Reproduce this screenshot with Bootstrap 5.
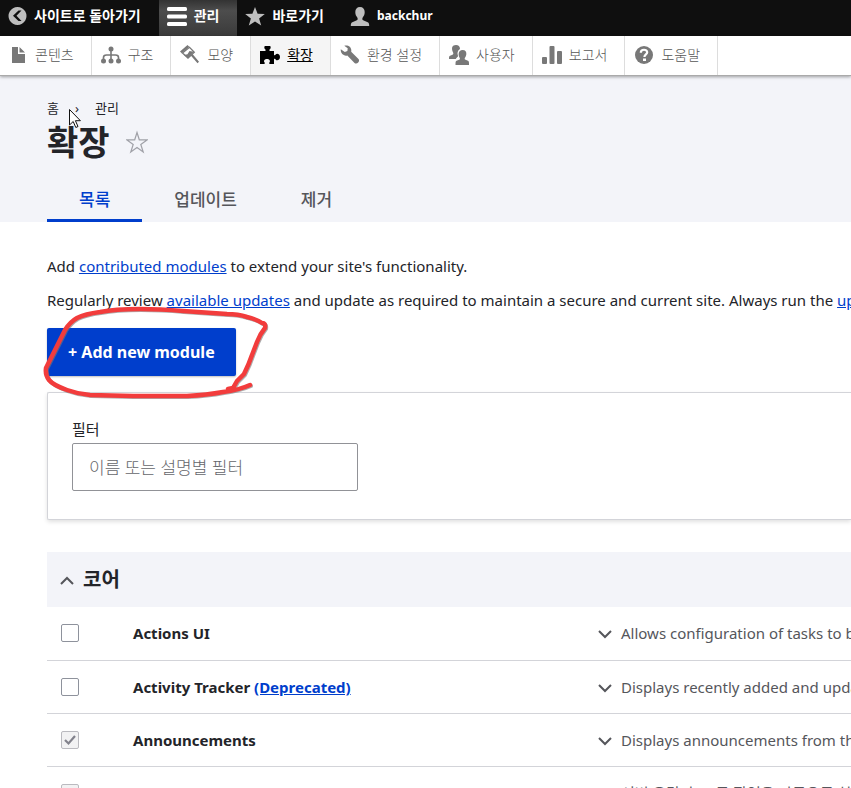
<!DOCTYPE html>
<html lang="ko">
<head>
<meta charset="utf-8">
<meta name="viewport" content="width=device-width, initial-scale=1">
<title>확장</title>
<link href="https://cdn.jsdelivr.net/npm/bootstrap@5.3.0/dist/css/bootstrap.min.css" rel="stylesheet">
<style>
body{font-family:"Noto Sans","Noto Sans CJK KR",sans-serif;font-size:15px;line-height:24px;color:#232429;overflow-x:hidden}
a{color:#003ecc}
svg{flex:none}
.adminbar{background:#0f0f0f;height:36px;font-size:14px;line-height:16px;font-weight:700}
.adminbar a{color:#fff;text-decoration:none;gap:7px;padding:0 18px 4px 8px;height:36px;white-space:nowrap}
.adminbar svg{fill:#bebebe}
.adminbar a.open{background:linear-gradient(#333,#4d4d4d 30%,#3a3a3a)}
.adminbar a.open svg{fill:#fff}
.adminbar .username{font-size:12px}
.tray{height:40px;border-bottom:1px solid #aaa;box-shadow:0 1px 3px rgba(0,0,0,.35);position:relative;z-index:1;font-size:14px;background:#fff}
.tray a{color:#565656;text-decoration:none;border-right:1px solid #ddd;padding:0 17px 2px 9px;gap:7px;font-weight:300;white-space:nowrap}
.tray svg{fill:#787878}
.tray a.now{background:#f5f5f5;color:#000;text-decoration:underline;font-weight:400}
.tray a.now svg{fill:#000}
.pagehead{background:#f3f4f9;padding:20px 47px 0;position:relative}
.crumbs{font-size:13px}
h1{font-size:34px;line-height:44px;font-weight:700}
.tabs{margin-top:12px}
.tabs a{color:#55565b;font-weight:500;font-size:17px;padding:12px 32px 6px;height:46px;text-decoration:none;border-bottom:3px solid transparent}
.tabs a.now{color:#003ecc;border-color:#003ecc}
.content-area{padding:32px 0 0 47px}
.intro{margin-bottom:10px}
.addbtn{background:#003ecc;color:#fff;font-weight:700;border-radius:2px;padding:12px 21px;box-shadow:0 1px 2px rgba(0,0,0,.25);line-height:24px;font-size:16px}
.addbtn:hover{background:#0036b1;color:#fff}
.filterbox{border:1px solid #d3d4d9;border-right:0;border-radius:2px 0 0 2px;box-shadow:0 2px 4px rgba(0,0,0,.12);padding:24px 24px 28px;margin-top:16px}
.filterbox label{font-size:15px;line-height:24px;padding-bottom:2px}
.filterbox input{width:286px;height:48px;border:1px solid #919297;border-radius:2px;padding:0 16px;font-size:17px;font-weight:300}
.filterbox input::placeholder{color:#65666b}
.group{background:#f3f4f9;height:55px;margin-top:32px;padding:0 12px}
.group button{font-size:20px;line-height:24px;font-weight:600;gap:8px;color:#232429}
.modules{table-layout:fixed;width:100%}
.modules td,.modules th{height:53px;border-bottom:1px solid #d3d4d9;padding:0;vertical-align:middle}
.modules .form-check-input{width:18px;height:18px;border:1px solid #8e929c;border-radius:2px;margin:0 0 0 14px;display:block}
.modules .form-check-input:disabled{opacity:1;background-color:#f2f2f3;border-color:#bababf}
.modules .form-check-input:checked{background-image:url("data:image/svg+xml,%3Csvg xmlns='http://www.w3.org/2000/svg' viewBox='0 0 18 18'%3E%3Cpath d='M4 9l3.500 3.500L14 5' fill='none' stroke='%2382828c' stroke-width='2.200'/%3E%3C/svg%3E");background-size:18px}
.c-check{width:86px}
.c-name{width:464px}
.desc{gap:8px;color:#55565b;font-size:15px;line-height:24px}
.ink{left:-7px;top:-22px;pointer-events:none}
.pointer{left:68px;top:32px;pointer-events:none}
</style>
<script src="https://cdn.jsdelivr.net/npm/bootstrap@5.3.0/dist/js/bootstrap.bundle.min.js"></script>
</head>
<body>
<nav class="adminbar d-flex" aria-label="관리 도구">
<a href="#" class="d-flex align-items-center"><svg width="19" height="18" viewBox="0 0 19 18"><path fill-rule="evenodd" d="M9.500 0a9 9 0 1 0 .01 0zM10.500 3.500h3L8.500 8.800l5 5.200h-3L5 8.800z"/></svg>사이트로 돌아가기</a>
<a href="#" class="open d-flex align-items-center"><svg width="20" height="19" viewBox="0 0 20 19"><rect width="20" height="4" rx="1.500"/><rect y="7.500" width="20" height="4" rx="1.500"/><rect y="15" width="20" height="4" rx="1.500"/></svg>관리</a>
<a href="#" class="d-flex align-items-center"><svg width="20" height="19" viewBox="0 0 20 19"><path d="M10 0l2.600 6.700 7.200.2-5.700 4.500 2.100 7.100L10 14.500l-6.200 4 2.100-7.100L.2 6.900l7.200-.2z"/></svg>바로가기</a>
<a href="#" class="d-flex align-items-center"><svg width="20" height="19" viewBox="0 0 20 19"><path d="M10 0c3 0 4.700 2 4.700 5 0 2.500-.8 4-2 5.500-.7 1.500-.5 2.500 1 3.100l4 1.600c1.300.6 1.500 2 1.500 3.800H.8c0-1.800.2-3.200 1.500-3.800l4-1.600c1.500-.6 1.700-1.600 1-3.100C6.100 9 5.300 7.500 5.300 5c0-3 1.700-5 4.700-5z"/></svg><span class="username">backchur</span></a>
</nav>
<nav class="tray d-flex" aria-label="관리 메뉴">
<a href="#" class="d-flex align-items-center"><svg width="19" height="18" viewBox="0 0 19 18"><path d="M3 1h6v7h7v9H3zM10.500 1L16 6.500h-5.500z"/></svg>콘텐츠</a>
<a href="#" class="d-flex align-items-center"><svg width="20" height="18" viewBox="0 0 20 18"><circle cx="10" cy="3" r="2.500"/><circle cx="2.500" cy="15" r="2.500"/><circle cx="10" cy="15" r="2.500"/><circle cx="17.500" cy="15" r="2.500"/><path fill="none" stroke="#787878" stroke-width="1.600" d="M10 4v10M2.500 14v-2.500q0-2.500 3-2.500h9q3 0 3 2.500V14"/></svg>구조</a>
<a href="#" class="d-flex align-items-center"><svg width="20" height="20" viewBox="0 0 20 20"><path d="M0 6.500L7.500 0l1.800 1.800-7.500 6.500z"/><path d="M2.500 8L9.500 2.300l4.800 5L8 13z" fill="none" stroke="#787878" stroke-width="1.300"/><path d="M4 10l3.500-.8L9.500 6l4.300.8-6 6.200zM10.800 10.500l1.700-1.500 6.500 7.800-1.500 1.500z"/></svg>모양</a>
<a href="#" class="now d-flex align-items-center"><svg width="20" height="18" viewBox="0 0 20 18"><path d="M0 5h5.500V3.500C4 3 4 .3 5 0h5c1 .3 1 3-.5 3.500V5H14v4c1 .5 1.300.2 1.800-.7C16.500 7.300 20 7.500 20 11s-3.500 3.700-4.200 2.700c-.5-.9-.8-1.200-1.800-.7v5H9.500c-.5-1-.2-1.500.2-2 1-1.500-.7-3-2.700-3s-3.700 1.500-2.700 3c.4.500.7 1 .2 2H0z"/></svg>확장</a>
<a href="#" class="d-flex align-items-center"><svg width="20" height="20" viewBox="0 0 20 20"><path d="M.8 4.200l4 2.800 2.600-.9.300-2.800L4.300.8C8.500-.2 12 2.500 11.200 6.700l7.300 7.300c2 2.500-1.500 6-4 4l-7.200-7.500C3.500 11.500.2 8 .8 4.200z"/></svg>환경 설정</a>
<a href="#" class="d-flex align-items-center"><svg width="20" height="20" viewBox="0 0 20 20"><path d="M7 0C9.500 0 11 1.500 11 4 8.500 5.500 8 8 9 11c0 1-1.500 1.500-2.200 3H0c0-2 0-2.800 1-3.200l2.500-1c1-.4 1-1.300.6-2.200C2 3 3 0 7 0z"/><path d="M13.500 5c3 0 4.200 2 3.800 4.500-.3 1.700-.8 2.500-1.500 3.500-.3 1 0 1.500.8 1.800l2.400 1c1 .4 1 1.700 1 4.200H6.500c0-2.500 0-3.800 1-4.200l2.600-1c.8-.3 1-.8.7-1.800C9 10.500 9 5 13.500 5z"/></svg>사용자</a>
<a href="#" class="d-flex align-items-center"><svg width="20" height="18" viewBox="0 0 20 18"><rect y="11" width="5" height="7" rx="1"/><rect x="7.500" width="5" height="18" rx="1"/><rect x="15" y="5" width="5" height="13" rx="1"/></svg>보고서</a>
<a href="#" class="d-flex align-items-center"><svg width="20" height="18" viewBox="0 0 20 18"><circle cx="10" cy="9" r="9"/><path d="M6.800 6.700c0-4 6.400-3.700 6.400-.4 0 2-2.800 2.200-2.800 4.700" fill="none" stroke="#fff" stroke-width="2.200"/><rect x="9" y="12.500" width="3" height="2.500" fill="#fff"/></svg>도움말</a>
</nav>
<header class="pagehead">
<nav class="crumbs" aria-label="이동 경로"><a href="#" class="text-reset text-decoration-none">홈</a><span class="px-3">›</span><a href="#" class="text-reset text-decoration-none">관리</a></nav>
<div class="d-flex align-items-center gap-3"><h1 class="m-0">확장</h1><button class="btn p-0 border-0 d-flex" aria-label="바로가기에 추가"><svg width="22" height="24" viewBox="0 0 22 24"><path d="M11 2.500l2.300 7.300 7.700.1-6.200 4.500 2.400 7.600-6.200-4.600-6.200 4.600 2.400-7.600L1 9.900l7.700-.1z" fill="none" stroke="#a0a1a8" stroke-width="1.200"/></svg></button></div>
<nav class="tabs d-flex" aria-label="탭"><a href="#" class="now">목록</a><a href="#">업데이트</a><a href="#">제거</a></nav>
<svg class="pointer position-absolute" width="14" height="21" viewBox="0 0 14 21" aria-hidden="true"><path d="M1.500 1.500v15.500l3.700-3.500 2.600 6 2.200-1-2.600-5.800h5z" fill="#fff" stroke="#111" stroke-width="1"/></svg>
</header>
<main class="content-area overflow-hidden">
<p class="intro text-nowrap">Add <a href="#">contributed modules</a> to extend your site's functionality.</p>
<p class="text-nowrap mb-3">Regularly review <a href="#">available updates</a> and update as required to maintain a secure and current site. Always run the <a href="#">update script</a></p>
<div class="position-relative d-flex">
<button class="btn addbtn border-0">+ Add new module</button>
<svg class="ink position-absolute" width="230" height="96" viewBox="40 306 230 96" aria-hidden="true">
<path transform="translate(1 1)" d="M228 389L233 388 237 381 244 374Q249 364 252 355L257 342Q260 334 265 328Q266 323 262 323Q256 319 247 317Q238 314 227 314L183 311Q160 309 140 309Q115 309 100 312Q85 314 77 318Q70 322 65 330L55 350 46 368Q45 375 49 380Q53 385 67 390Q78 394 90 395L133 396 187 396Q207 395 223 392Q239 390 250 385" fill="none" stroke="#777" stroke-opacity=".6" stroke-width="4" stroke-linecap="round" stroke-linejoin="round"/>
<path d="M228 389L233 388 237 381 244 374Q249 364 252 355L257 342Q260 334 265 328Q266 323 262 323Q256 319 247 317Q238 314 227 314L183 311Q160 309 140 309Q115 309 100 312Q85 314 77 318Q70 322 65 330L55 350 46 368Q45 375 49 380Q53 385 67 390Q78 394 90 395L133 396 187 396Q207 395 223 392Q239 390 250 385" fill="none" stroke="#f23c3c" stroke-width="4.500" stroke-linecap="round" stroke-linejoin="round"/></svg>
</div>
<div class="filterbox"><label for="filter" class="d-block">필터</label><input id="filter" type="search" placeholder="이름 또는 설명별 필터"></div>
<div class="group d-flex align-items-center"><button class="btn p-0 border-0 d-flex align-items-center"><svg width="16" height="16" viewBox="0 0 16 16"><path d="M2 12l6-6 6 6" fill="none" stroke="#55565b" stroke-width="2"/></svg>코어</button></div>
<table class="modules">
<colgroup><col class="c-check"><col class="c-name"><col></colgroup>
<tbody>
<tr><td><input class="form-check-input" type="checkbox" id="m1"></td><th scope="row"><label for="m1">Actions UI</label></th><td><button class="btn desc p-0 border-0 d-flex align-items-center text-nowrap"><svg width="16" height="16" viewBox="0 0 16 16"><path d="M2 6l6 6 6-6" fill="none" stroke="#55565b" stroke-width="2"/></svg>Allows configuration of tasks to be executed in response to events.</button></td></tr>
<tr><td><input class="form-check-input" type="checkbox" id="m2"></td><th scope="row"><label for="m2">Activity Tracker</label> <a href="#">(Deprecated)</a></th><td><button class="btn desc p-0 border-0 d-flex align-items-center text-nowrap"><svg width="16" height="16" viewBox="0 0 16 16"><path d="M2 6l6 6 6-6" fill="none" stroke="#55565b" stroke-width="2"/></svg>Displays recently added and updated content.</button></td></tr>
<tr><td><input class="form-check-input" type="checkbox" id="m3" checked disabled></td><th scope="row"><label for="m3">Announcements</label></th><td><button class="btn desc p-0 border-0 d-flex align-items-center text-nowrap"><svg width="16" height="16" viewBox="0 0 16 16"><path d="M2 6l6 6 6-6" fill="none" stroke="#55565b" stroke-width="2"/></svg>Displays announcements from the Drupal community.</button></td></tr>
<tr><td><input class="form-check-input" type="checkbox" id="m4" checked disabled></td><th scope="row"><label for="m4">Automated Cron</label></th><td><button class="btn desc p-0 border-0 d-flex align-items-center text-nowrap"><svg width="16" height="16" viewBox="0 0 16 16"><path d="M2 6l6 6 6-6" fill="none" stroke="#55565b" stroke-width="2"/></svg>서버 응답 후 크론 작업을 자동으로 실행합니다.</button></td></tr>
</tbody>
</table>
</main>
</body>
</html>
